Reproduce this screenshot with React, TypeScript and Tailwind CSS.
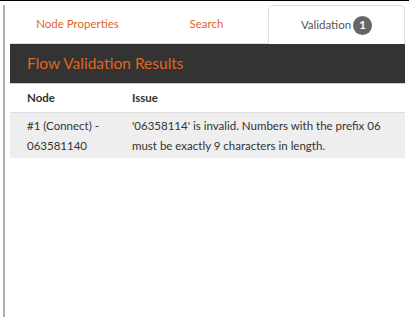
import React from "react";

export default function App() {
  return (
    <div className="w-[409px] h-[317px] bg-white relative overflow-hidden" style={{ fontFamily: "Lato, 'Open Sans', sans-serif" }}>
      <div className="h-px bg-black" />
      <div className="flex h-[316px]">
        <div className="w-[3px]" />
        <div className="w-[2px] mt-[4px] bg-[#b1b0a5]" />
        <div className="w-[5px]" />
        <div className="w-[395px] flex flex-col">
          {/* tabs */}
          <div className="flex h-[39px] mt-[4px]">
            <div className="w-[135px] border-b border-[#dddddd] flex items-center justify-center text-[11.5px] text-[#e0661f]">Node Properties</div>
            <div className="w-[123px] border-b border-[#dddddd] flex items-center justify-center text-[11.5px] text-[#e0661f]">Search</div>
            <div className="flex-1 border border-b-0 border-[#dddddd] rounded-t-[5px] flex items-center justify-center gap-[2px] text-[11.5px] text-[#555555] bg-white">
              <span>Validation</span>
              <span className="w-[19px] h-[19px] rounded-full bg-[#666666] text-white text-[11.5px] font-bold flex items-center justify-center">1</span>
            </div>
          </div>
          <div className="h-[39px] bg-[#333333] border-b border-[#cccccc] flex items-center pl-[17px] text-[15.5px] text-[#e0661f] box-content">
            Flow Validation Results
          </div>
          <div className="h-[28px] flex items-center text-[11.5px] font-bold text-[#333333]">
            <div className="w-[122px] pl-[17px]">Node</div>
            <div>Issue</div>
          </div>
          <div className="bg-[#eeeeee] border-t border-[#dddddd] flex text-[11.5px] leading-[20px] text-[#333333] pt-[3px] pb-[2px]">
            <div className="w-[122px] pl-[17px]">#1 (Connect) -<br />063581140</div>
            <div className="flex-1">'06358114' is invalid. Numbers with the prefix 06<br />must be exactly 9 characters in length.</div>
          </div>
        </div>
      </div>
    </div>
  );
}
